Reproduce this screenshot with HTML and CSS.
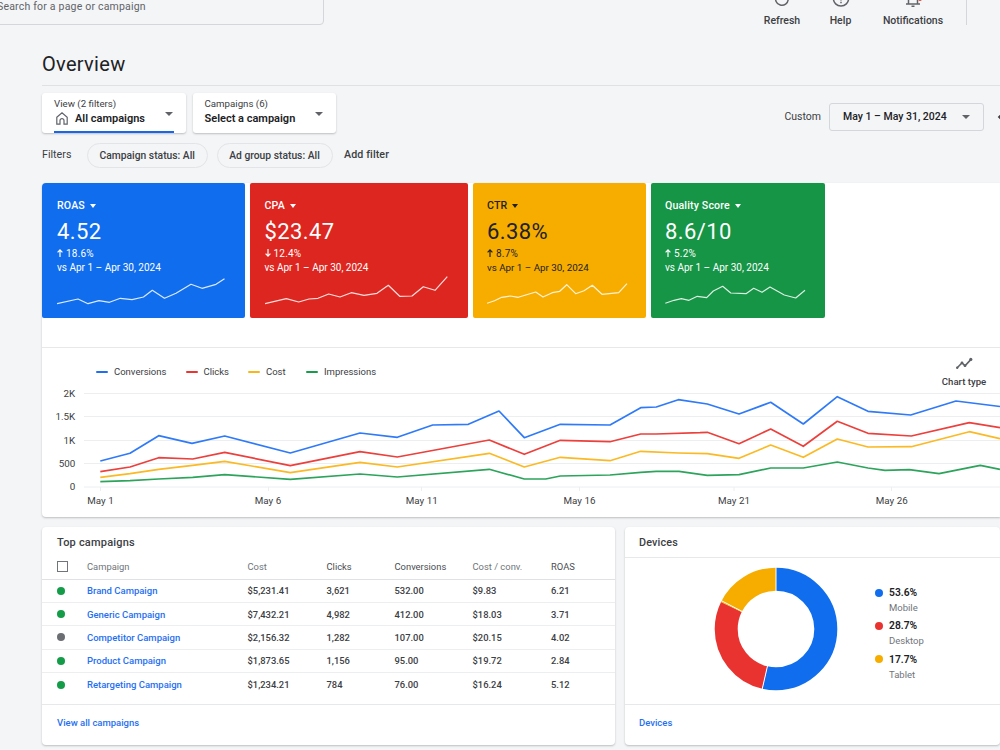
FILE: index.html
```html
<!DOCTYPE html>
<html lang="en">
<head>
  <meta charset="UTF-8">
  <title>Overview</title>
  <meta name="viewport" content="width=device-width, initial-scale=1.0">
  <link rel="stylesheet" href="styles.css">
</head>
<body>

  <!-- top bar -->
  <header class="topbar">
    <div class="search">Search for a page or campaign</div>
    <nav class="actions">
      <div class="action refresh">
        <svg width="18" height="18" viewBox="0 0 18 18"><path d="M15.2 9.2a6.3 6.3 0 1 1-2-4.8M15.5 1.5v4h-4"/></svg>
        <span>Refresh</span>
      </div>
      <div class="action help">
        <svg width="18" height="18" viewBox="0 0 18 18"><circle cx="9" cy="8.500" r="7.600"/><path d="M6.800 6.500a2.200 2.200 0 1 1 3.400 1.900C9.400 8.900 9 9.300 9 10.500M9 11.800v1.400"/></svg>
        <span>Help</span>
      </div>
      <div class="action notifications">
        <svg width="18" height="18" viewBox="0 0 18 18"><path d="M2 14h14M4.500 14V8a4.500 4.500 0 0 1 9 0v6M9 3.500V1.500M7.500 16.300h3"/><circle class="alert" cx="16" cy="9.300" r="1.800"/></svg>
        <span>Notifications</span>
      </div>
    </nav>
  </header>

  <main>
    <h1>Overview</h1>

    <div class="toolbar">
      <div class="picker active">
        <div class="picker-text">
          <small>View (2 filters)</small>
          <b><svg class="home" width="12" height="13" viewBox="0 0 12 13"><path d="M.8 5.200 6 .9l5.200 4.300v7H8V8.600a2 2 0 0 0-4 0v3.600H.8z"/></svg>All campaigns</b>
        </div>
        <i class="caret"></i>
      </div>
      <div class="picker">
        <div class="picker-text">
          <small>Campaigns (6)</small>
          <b>Select a campaign</b>
        </div>
        <i class="caret"></i>
      </div>
      <div class="range">
        <span>Custom</span>
        <div class="date">May 1 – May 31, 2024 <i class="caret"></i></div>
        <svg class="prev" width="8" height="10" viewBox="0 0 8 10"><path d="M6 1 2 5l4 4"/></svg>
      </div>
    </div>

    <div class="filters">
      <span class="filters-label">Filters</span>
      <span class="chip status">Campaign status: All</span>
      <span class="chip group">Ad group status: All</span>
      <span class="add">Add filter</span>
    </div>

    <section class="panel performance">
      <div class="cards">
        <div class="card blue">
          <div class="name">ROAS <i class="caret"></i></div>
          <div class="value">4.52</div>
          <div class="change"><svg width="6" height="8" viewBox="0 0 6 8"><path d="M3 8V1M.6 3.300 3 .9l2.400 2.400"/></svg>18.6%</div>
          <div class="versus">vs Apr 1 – Apr 30, 2024</div>
          <svg class="spark" width="172" height="32"><polyline points="0,28.7 21,24 31,28.7 42,25.7 52.5,27.3 63.3,23.3 75,24.7 86.5,22 95.3,15.3 107.5,23.3 119,18.3 134,9.3 145,13.3 159,9.3 167.5,3.7"/></svg>
        </div>
        <div class="card red">
          <div class="name">CPA <i class="caret"></i></div>
          <div class="value">$23.47</div>
          <div class="change"><svg width="6" height="8" viewBox="0 0 6 8"><path d="M3 0v7M.6 4.700 3 7.100l2.400-2.400"/></svg>12.4%</div>
          <div class="versus">vs Apr 1 – Apr 30, 2024</div>
          <svg class="spark" width="186" height="32"><polyline points="0,28.7 21.3,23.7 33.7,27 44,24 53,23.3 63.7,19 75,22 86.3,17.7 99,20.3 112,18.3 123.3,10.3 134.7,21.3 147,21 158.3,11.7 170,15.3 182.3,1.7"/></svg>
        </div>
        <div class="card yellow">
          <div class="name">CTR <i class="caret"></i></div>
          <div class="value">6.38%</div>
          <div class="change"><svg width="6" height="8" viewBox="0 0 6 8"><path d="M3 8V1M.6 3.300 3 .9l2.400 2.400"/></svg>8.7%</div>
          <div class="versus">vs Apr 1 – Apr 30, 2024</div>
          <svg class="spark" width="144" height="32"><polyline points="0,28.3 7.5,25.7 14.7,22.3 23.3,21 31.3,22.3 48.7,17 56,22 65.3,17.7 72.7,16.3 79.7,9.7 88.7,18.7 97,15.7 105.3,10.3 115,19.3 131.7,17.7 140,8.7"/></svg>
        </div>
        <div class="card green">
          <div class="name">Quality Score <i class="caret"></i></div>
          <div class="value">8.6/10</div>
          <div class="change"><svg width="6" height="8" viewBox="0 0 6 8"><path d="M3 8V1M.6 3.300 3 .9l2.400 2.400"/></svg>5.2%</div>
          <div class="versus">vs Apr 1 – Apr 30, 2024</div>
          <svg class="spark" width="144" height="32"><polyline points="0.3,28.3 9,25.3 16.3,23.7 24,25.3 32.3,21.3 41.7,22.7 48.3,16 57.7,11.3 65.7,18 81,18.7 88.7,13.3 97,17.3 105,12 119.3,20 130.7,23 140,15.3"/></svg>
        </div>
      </div>

      <div class="chart-head">
        <ul class="legend">
          <li class="conversions">Conversions</li>
          <li class="clicks">Clicks</li>
          <li class="cost">Cost</li>
          <li class="impressions">Impressions</li>
        </ul>
        <div class="chart-type">
          <svg width="18" height="13" viewBox="0 0 18 13"><path d="M2 11 7 5.800l3 3L16 2.400"/><circle cx="2.200" cy="10.800" r="1.200"/><circle cx="7" cy="6" r="1.400"/><circle cx="10" cy="8.700" r="1.400"/><circle cx="15.800" cy="2.400" r="1.600"/></svg>
          <span>Chart type</span>
        </div>
      </div>

      <svg class="chart" width="958" height="130" viewBox="42 387 958 130">
        <path class="grid" d="M84 393.500h916M84 416.500h916M84 440.500h916M84 463.500h916M84 487h916M100.500 487v4M268.500 487v4M421.500 487v4M579.500 487v4M734 487v4M891.500 487v4"/>
        <g class="y-axis">
          <text x="75.200" y="397">2K</text>
          <text x="75.200" y="420.300">1.5K</text>
          <text x="75.200" y="443.700">1K</text>
          <text x="75.200" y="467">500</text>
          <text x="75.200" y="490.300">0</text>
        </g>
        <g class="x-axis">
          <text x="100.500" y="504">May 1</text>
          <text x="268" y="504">May 6</text>
          <text x="421.700" y="504">May 11</text>
          <text x="579.500" y="504">May 16</text>
          <text x="734" y="504">May 21</text>
          <text x="891.700" y="504">May 26</text>
        </g>
        <polyline class="line impressions" points="100.3,481.7 130,480.7 158.7,479 192.7,477.3 224.7,474.7 290.3,479.3 360,474 397.3,477 489.3,469.3 524.3,479 545.7,479 560.3,476 610,475 640.7,472.3 656.3,471.3 679,471.3 707.3,475.3 739,474.7 770.7,468 803.3,468 837.3,462 868,468 885,470.3 909.3,469.7 939,473.7 980.3,465.3 1000,469.3"/>
        <polyline class="line cost" points="100.3,477.3 130,473.7 158.7,469.3 192.7,465.3 224.7,461.3 290.3,472.7 360,462.3 397.3,467 489.3,453.3 524.3,467 560.3,457.3 610,460.7 640.7,451.3 678.3,453 707.3,453.7 739,458.3 770.7,445 803.3,457.3 837.3,439 868,447 911.3,446.7 969.3,431.7 1000,438.7"/>
        <polyline class="line clicks" points="100.3,471.7 130,467 158.7,457.7 192.7,459 224.7,452.3 290.3,465.7 360,451.7 397.3,457 489.3,440 524.3,454.3 560.3,440.3 610,441.7 640.7,434 656,434 700,432.7 707.3,432.3 739,443.7 770.7,429 803.3,446.3 837.3,421.3 868,433.3 911.3,436 969.3,422.7 1000,427.7"/>
        <polyline class="line conversions" points="100.3,461 130,453.3 158.7,435.7 192,443.3 224.7,436 290.3,453 360,433 397.3,437.3 432.7,425 468.3,424.3 499,411 524.3,437.7 560.3,424.3 610,425 640.7,407.7 656.3,407 678.3,399.7 707.3,404 739,414 770.7,402.3 803.3,424 837.3,396.7 868,411.3 910.7,415 956,401 1000,406.5"/>
      </svg>
    </section>

    <div class="bottom">
      <section class="panel campaigns">
        <h2>Top campaigns</h2>
        <div class="row head"><span><i class="checkbox"></i></span><span>Campaign</span><span>Cost</span><span class="dark">Clicks</span><span class="dark">Conversions</span><span>Cost / conv.</span><span class="dark">ROAS</span></div>
        <div class="row"><i class="dot on"></i><a>Brand Campaign</a><span>$5,231.41</span><span>3,621</span><span>532.00</span><span>$9.83</span><span>6.21</span></div>
        <div class="row"><i class="dot on"></i><a>Generic Campaign</a><span>$7,432.21</span><span>4,982</span><span>412.00</span><span>$18.03</span><span>3.71</span></div>
        <div class="row"><i class="dot"></i><a>Competitor Campaign</a><span>$2,156.32</span><span>1,282</span><span>107.00</span><span>$20.15</span><span>4.02</span></div>
        <div class="row"><i class="dot on"></i><a>Product Campaign</a><span>$1,873.65</span><span>1,156</span><span>95.00</span><span>$19.72</span><span>2.84</span></div>
        <div class="row"><i class="dot on"></i><a>Retargeting Campaign</a><span>$1,234.21</span><span>784</span><span>76.00</span><span>$16.24</span><span>5.12</span></div>
        <div class="foot"><a>View all campaigns</a></div>
      </section>

      <section class="panel devices">
        <h2>Devices</h2>
        <div class="devices-body">
          <svg class="donut" width="124" height="124" viewBox="-62 -62 124 124">
            <g transform="rotate(-90)">
              <circle class="mobile" r="49.800" pathLength="100" stroke-dasharray="53.6 46.4"/>
              <circle class="desktop" r="49.800" pathLength="100" stroke-dasharray="28.7 71.3" stroke-dashoffset="-53.6"/>
              <circle class="tablet" r="49.800" pathLength="100" stroke-dasharray="17.7 82.3" stroke-dashoffset="-82.3"/>
            </g>
            <path class="gap" d="M0-37v-26M-8.300 36.100-14.100 61.400M-33.200-17.200-55.900-29"/>
          </svg>
          <ul class="shares">
            <li class="mobile"><b>53.6%</b><span>Mobile</span></li>
            <li class="desktop"><b>28.7%</b><span>Desktop</span></li>
            <li class="tablet"><b>17.7%</b><span>Tablet</span></li>
          </ul>
        </div>
        <div class="foot"><a>Devices</a></div>
      </section>
    </div>
  </main>

</body>
</html>
```
FILE: styles.css
```css
* {
  box-sizing: border-box;
}

body {
  margin: 0;
  height: 750px;
  overflow: hidden;
  background: #f4f5f7;
  font-family: Roboto, "Liberation Sans", sans-serif;
  font-size: 10px;
  color: #3c4043;
}

svg {
  display: block;
  fill: none;
}

ul {
  margin: 0;
  padding: 0;
  list-style: none;
}

.caret {
  display: inline-block;
  border: 4px solid transparent;
  border-top-color: #5f6368;
  border-bottom: 0;
}

/* top bar */
.topbar {
  display: flex;
  justify-content: space-between;
  height: 25px;
}

.search {
  width: 334px;
  height: 37px;
  margin: -12px 0 0 -10px;
  padding: 11px 0 0 6px;
  border: 1px solid #d3d6da;
  border-radius: 4px;
  font-size: 10.5px;
  line-height: 13px;
  letter-spacing: .2px;
  color: #5f6368;
}

.actions {
  display: flex;
  width: 215px;
  margin-right: 33px;
  border-right: 1px solid #d3d6da;
}

.action {
  display: flex;
  flex-direction: column;
  align-items: center;
  margin-top: -10px;
  font-size: 10.5px;
  font-weight: 500;
  line-height: 14px;
}

.action svg {
  flex: none;
  margin-bottom: 6px;
  overflow: visible;
  stroke: #5f6368;
  stroke-width: 1.5;
}

.action .alert {
  fill: #ea4335;
  stroke: none;
}

.refresh {
  width: 60px;
}

.help {
  width: 57px;
}

.notifications {
  width: 88px;
}

/* page head */
main {
  padding-left: 42px;
}

h1 {
  height: 61px;
  margin: 0;
  padding-top: 27px;
  border-bottom: 1px solid #dfe1e4;
  font-size: 20px;
  font-weight: 400;
  line-height: 24px;
  letter-spacing: .3px;
  color: #202124;
}

.toolbar {
  display: flex;
  gap: 7px;
  padding-top: 7px;
}

.picker {
  display: flex;
  position: relative;
  justify-content: space-between;
  width: 143.5px;
  height: 40px;
  padding: 3px 13px 0 12px;
  border-radius: 3px;
  background: #fff;
  box-shadow: 0 1px 2px rgba(60, 64, 67, .3);
}

.picker.active::after {
  content: "";
  position: absolute;
  left: 12px;
  right: 12px;
  bottom: 0;
  height: 2.5px;
  background: #1a66e8;
}

.picker small,
.picker b {
  display: flex;
  align-items: center;
  height: 14px;
  font-size: 9.7px;
  white-space: nowrap;
}

.picker b {
  height: 16px;
  font-size: 11px;
  font-weight: 600;
  color: #202124;
}

.picker .caret {
  margin-top: 16px;
}

.home {
  margin: 0 7px 0 2px;
  stroke: #5f6368;
  stroke-width: 1.2;
}

.range {
  display: flex;
  align-items: center;
  margin-left: auto;
  height: 27px;
  margin-top: 10px;
  font-size: 10.5px;
}

.date {
  display: flex;
  align-items: center;
  justify-content: space-between;
  width: 155px;
  height: 28px;
  margin: 0 13px 0 8px;
  padding: 0 13px;
  border: 1px solid #d3d6da;
  border-radius: 3px;
  font-weight: 500;
  color: #202124;
}

.prev {
  margin-right: -5px;
  stroke: #3c4043;
  stroke-width: 1.8;
}

.filters {
  display: flex;
  align-items: center;
  height: 25px;
  margin-top: 10px;
  font-size: 10.7px;
  white-space: nowrap;
}

.filters-label {
  width: 45px;
  padding-bottom: 3px;
}

.chip {
  width: 120.5px;
  height: 25px;
  margin-right: 9px;
  border: 1px solid #e2e4e7;
  border-radius: 13px;
  font-size: 10.3px;
  font-weight: 500;
  line-height: 24px;
  text-align: center;
}

.chip.group {
  width: 116px;
  margin-right: 11.5px;
}

.add {
  padding-bottom: 2px;
  font-weight: 500;
  letter-spacing: .1px;
}

/* white panels */
.panel {
  background: #fff;
  border-radius: 4px;
  box-shadow: 0 1px 2px rgba(60, 64, 67, .3);
}

.performance {
  height: 334px;
  margin-top: 15px;
  border-radius: 4px 0 0 4px;
}

.cards {
  display: grid;
  grid-template-columns: 202.5px 218.5px 173px 174px;
  gap: 0 5px;
  height: 165px;
  border-bottom: 1px solid #e6e8ea;
}

.card {
  height: 135px;
  padding: 15px 0 0 15px;
  border-radius: 2px;
  color: #fff;
}

.card.yellow,
.card.green {
  padding-left: 14px;
}

.card.blue {
  border-top-left-radius: 4px;
  background: #0f6dee;
}

.card.red {
  background: #de2620;
}

.card.yellow {
  background: #f7ad00;
  color: #202124;
}

.card.green {
  background: #159545;
}

.name {
  display: flex;
  align-items: center;
  gap: 5px;
  height: 15px;
  font-size: 10.6px;
  font-weight: 500;
  letter-spacing: .15px;
}

.name .caret {
  border-width: 4px 3.5px 0;
  border-top-color: currentColor;
}

.value {
  height: 33px;
  font-size: 22px;
  line-height: 37px;
  letter-spacing: .4px;
}

.change,
.versus {
  display: flex;
  align-items: center;
  height: 14px;
  font-size: 10px;
}

.change {
  letter-spacing: .2px;
}

.yellow .versus {
  font-size: 9.8px;
}

.change svg {
  margin-right: 3px;
  stroke: currentColor;
  stroke-width: 1.2;
}

.spark {
  margin-top: 1px;
  stroke: rgba(255, 255, 255, .85);
  stroke-width: 1.2;
  stroke-linejoin: round;
}

/* chart */
.chart-head {
  display: flex;
  justify-content: space-between;
  height: 39px;
}

.legend {
  display: flex;
  align-items: flex-start;
  margin: 16px 0 0 54px;
  font-size: 9.5px;
  line-height: 15px;
}

.legend li {
  display: flex;
  align-items: center;
}

.legend li::before {
  content: "";
  width: 12px;
  height: 2px;
  margin-right: 6px;
  border-radius: 1px;
}

.legend .conversions {
  width: 89.5px;
}

.legend .conversions::before {
  background: #1f6ff0;
}

.legend .clicks {
  width: 62.5px;
}

.legend .clicks::before {
  background: #ea3530;
}

.legend .cost {
  width: 58px;
}

.legend .cost::before {
  background: #fab619;
}

.legend .impressions::before {
  background: #189c4b;
}

.chart-type {
  display: flex;
  flex-direction: column;
  align-items: center;
  width: 72px;
  padding-top: 9px;
  font-size: 9.6px;
  font-weight: 500;
  line-height: 15px;
}

.chart-type svg {
  flex: none;
  margin-bottom: 4px;
  stroke: #5f6368;
  stroke-width: 1.6;
}

.chart-type circle {
  fill: #5f6368;
  stroke: none;
}

.grid {
  stroke: #eceef0;
}

.chart text {
  fill: #3c4043;
  font-size: 9.8px;
}

.y-axis {
  text-anchor: end;
}

.x-axis {
  text-anchor: middle;
}

.line {
  stroke-width: 1.7;
  stroke-linejoin: round;
}

.line.conversions {
  stroke: #2f7af8;
}

.line.clicks {
  stroke: #ec403c;
}

.line.cost {
  stroke: #fbb924;
}

.line.impressions {
  stroke: #2ca45b;
}

/* bottom row */
.bottom {
  display: grid;
  grid-template-columns: 573px 1fr;
  gap: 10px;
  margin-top: 10px;
}

.bottom .panel {
  display: flex;
  flex-direction: column;
  height: 217.5px;
}

h2 {
  margin: 0;
  padding: 8px 15px 0;
  height: 27.5px;
  font-size: 11px;
  font-weight: 500;
  line-height: 16px;
  letter-spacing: .2px;
}

a {
  font-weight: 500;
  color: #1f70f2;
}

.row {
  display: grid;
  grid-template-columns: 30px 160.5px 79px 68px 78px 78.5px 1fr;
  align-items: center;
  height: 23.4px;
  padding-left: 15px;
  border-bottom: 1px solid #eceef0;
  font-size: 9.4px;
  font-weight: 500;
}

.row a {
  font-size: 9.5px;
}

.row:nth-last-child(2) {
  border: 0;
}

.row.head {
  height: 25px;
  border-color: #dfe1e4;
  font-weight: 400;
  color: #70757a;
}

.row .dark {
  color: #4a4d51;
}

.checkbox {
  display: block;
  width: 11px;
  height: 11px;
  border: 1px solid #70757a;
}

.dot {
  width: 8px;
  height: 8px;
  border-radius: 50%;
  background: #6b6e72;
}

.dot.on {
  background: #159c48;
}

.foot {
  height: 40.5px;
  margin-top: auto;
  padding-left: 15px;
  border-top: 1px solid #e6e8ea;
  font-size: 9.5px;
  line-height: 36px;
}

.devices h2 {
  flex: none;
  height: 31px;
  padding-left: 14px;
  border-bottom: 1px solid #e6e8ea;
  font-size: 10.8px;
  letter-spacing: .15px;
}

.devices .foot {
  padding-left: 14px;
}

.devices-body {
  display: flex;
  padding: 9px 0 0 89px;
}

.donut circle {
  stroke-width: 23;
}

.donut .mobile {
  stroke: #0f6dee;
}

.donut .desktop {
  stroke: #e93330;
}

.donut .tablet {
  stroke: #f7ad00;
}

.gap {
  stroke: #fff;
}

.shares {
  margin: 18px 0 0 36.5px;
}

.shares li {
  display: grid;
  grid-template-columns: 8px 1fr;
  column-gap: 6.5px;
  align-items: center;
  height: 33.3px;
  grid-template-rows: 15px 15px;
}

.shares li::before {
  content: "";
  width: 8px;
  height: 8px;
  border-radius: 50%;
  background: #0f6dee;
}

.shares .desktop::before {
  background: #e93330;
}

.shares .tablet::before {
  background: #f7ad00;
}

.shares b {
  font-size: 10.3px;
  font-weight: 600;
  color: #202124;
}

.shares span {
  grid-column: 2;
  font-size: 9.5px;
  color: #70757a;
}
```
